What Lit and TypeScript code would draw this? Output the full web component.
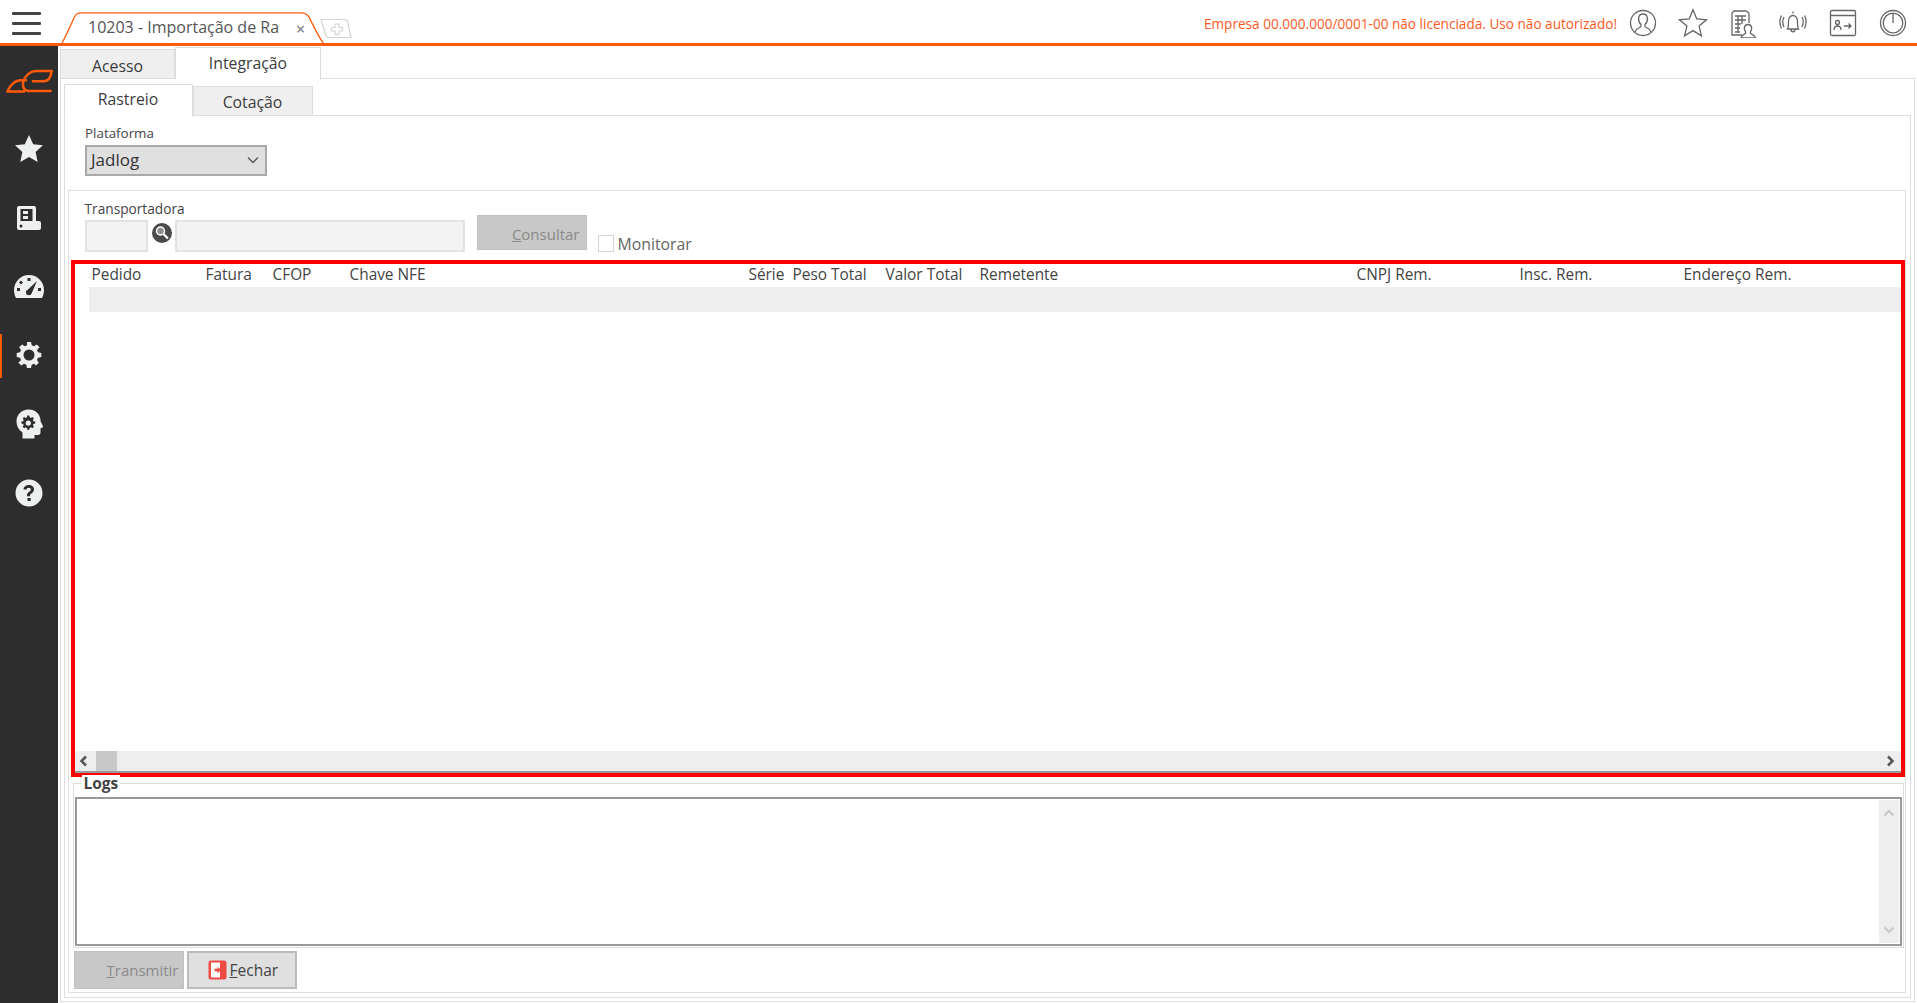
import { LitElement, html, css, svg } from "lit";
import { customElement } from "lit/decorators.js";

const COLS = [
  "Pedido", "Fatura", "CFOP", "Chave NFE", "Série", "Peso Total",
  "Valor Total", "Remetente", "CNPJ Rem.", "Insc. Rem.", "Endereço Rem.",
];

const I = {
  star: svg`<path d="M14 1l3.900 8.600 9.100 1-6.800 6.300 1.900 9.300L14 21.500 5.900 26.200l1.900-9.300L1 10.600l9.100-1z"/>`,
  book: svg`<path fill-rule="evenodd" d="M2 0h15a2 2 0 0 1 2 2v13h3a2 2 0 0 1 2 2v5a2 2 0 0 1-2 2H2a2 2 0 0 1-2-2V2a2 2 0 0 1 2-2zM3.500 3v12h12V3zM6 5h5v3H6zM6 10h5v3H6zM4 18.500a1.500 1.500 0 1 0 0 3 1.500 1.500 0 0 0 0-3z"/>`,
  gauge: svg`<path fill-rule="evenodd" d="M15 0a15 15 0 0 1 15 15c0 3-.8 5.800-2 8H2c-1.200-2.200-2-5-2-8A15 15 0 0 1 15 0zm-1.500 3v3h3V3zM7 5.500 5 7.500l2 2 2-2zM3 13v3h3v-3zm21 0v3h3v-3zM23 6l-9 8.500a3 3 0 1 0 3.800 3.500z"/>`,
  gear: svg`<path fill-rule="evenodd" d="M11 0h4l.7 3.300 2.300 1 2.800-1.800 2.800 2.800L21 8l1 2.300 3.300.7v4l-3.300.7-1 2.300 1.800 2.800-2.800 2.800L18 21.800l-2.300 1L15 26h-4l-.7-3.200-2.300-1-2.800 1.800-2.800-2.800L5 18l-1-2.300L.7 15v-4L4 10.300 5 8 3.200 5.300 6 2.500l2.800 1.800 2.300-1zm2 7.500a5.500 5.500 0 1 0 0 11 5.500 5.500 0 0 0 0-11z"/>`,
  head: svg`<path fill-rule="evenodd" d="M13 0c7 0 12 4.800 12 11 0 1.200 2.500 5 2.500 6 0 1-1.500 1.500-2.500 1.800V23c0 1.500-1 2.500-2.500 2.500H19V29H7v-6C3 20.500 1 16.500 1 12 1 5 6 0 13 0zm-1.200 6-.4 1.800-1.200.6-1.600-1-1.400 1.500 1 1.500-.5 1.300-1.800.4v2l1.800.4.500 1.300-1 1.500 1.400 1.500 1.600-1 1.200.6.400 1.800h2l.4-1.800 1.200-.6 1.600 1 1.400-1.500-1-1.500.5-1.300 1.800-.4v-2l-1.800-.4-.5-1.300 1-1.500-1.400-1.500-1.600 1-1.200-.6-.4-1.800zm1 5a2.600 2.600 0 1 1 0 5.200 2.600 2.600 0 0 1 0-5.200z"/>`,
  help: svg`<path fill-rule="evenodd" d="M13.500 0a13.500 13.500 0 1 1 0 27 13.500 13.500 0 0 1 0-27zm-.2 5.500c-3 0-5 1.600-5.400 4.300l3 .5c.2-1.300 1-2 2.300-2 1.200 0 2.100.7 2.100 1.800 0 1-.6 1.500-1.600 2.200-1.500 1-2.200 2-2.200 3.700v.8h3V16c0-.9.400-1.300 1.400-2 1.500-1 2.600-2.200 2.600-4.200 0-2.600-2.200-4.300-5.200-4.300zM12 18.500v3h3.200v-3z"/>`,
};

@customElement("app-root")
export class AppRoot extends LitElement {
  static styles = css`
    :host {
      display: block;
      width: 1917px;
      height: 1003px;
      overflow: hidden;
      background: #fff;
      color: #3c3c3c;
      font-family: "Open Sans", "Noto Sans", sans-serif;
      font-size: 15px;
      line-height: 20px;
    }
    .top {
      height: 43px;
      border-bottom: 3px solid #ff5a0a;
      display: flex;
      align-items: flex-start;
      position: relative;
    }
    .burger { margin: 12px 0 0 12px; width: 29px; height: 23px; display: flex; flex-direction: column; justify-content: space-between; }
    .burger i { display: block; height: 3px; background: #444; border-radius: 1px; }
    .doc-tab { position: relative; margin: 12px 0 0 20px; width: 265px; height: 33px; flex: none; }
    .doc-tab svg { position: absolute; left: 0; top: 0; }
    .doc-title { position: absolute; left: 27px; top: 5px; font-size: 16px; color: #555; white-space: nowrap; }
    .doc-x { position: absolute; left: 235px; top: 7px; font-size: 16px; color: #888; font-weight: 600; }
    .new-tab { margin: 18px 0 0 -6px; flex: none; }
    .top-right { margin-left: auto; display: flex; align-items: center; height: 43px; padding-right: 9px; }
    .warn { color: #ff5a1e; font-size: 13.600px; margin-right: 11px; white-space: nowrap; margin-top: 4px; }
    .tools { display: flex; gap: 20px; margin-top: 3px; }
    .tools svg { display: block; width: 30px; height: 30px; fill: none; stroke: #666; stroke-width: 1.300; }
    .body { display: flex; height: 957px; }
    .side { width: 58px; background: #2d2d2d; flex: none; position: relative; display: flex; flex-direction: column; align-items: center; padding-top: 23px; box-sizing: border-box; }
    .side .logo { width: 48px; height: 24px; margin-bottom: 41px; }
    .ico { display: block; fill: #eef0f0; height: 30px; margin-bottom: 38.800px; width: 30px; flex: none; }
    .active-bar { position: absolute; left: 0; top: 288px; width: 2px; height: 44px; background: #ff5a0a; }
    .main { flex: 1; min-width: 0; padding: 3px 2px 1px 2px; display: flex; flex-direction: column; }
    .tabs { display: flex; align-items: flex-end; height: 29px; flex: none; }
    .tab { box-sizing: border-box; background: #efefef; border: 1px solid #dcdcdc; border-bottom: none; display: flex; align-items: center; justify-content: center; flex: none; color: #3c3c3c; font-size: 15.800px; padding-top: 3px; }
    .tab.on { background: #fff; border-bottom: 1px solid #fff; margin-bottom: -2px; position: relative; padding-top: 0; padding-bottom: 3px; }
    .t-acesso { width: 115px; height: 29px; }
    .tab.on.t-integ { width: 146px; height: 33px; padding-bottom: 1px; }
    .t-ras { width: 129px; height: 33px; }
    .t-cot { width: 120px; height: 29px; }
    .tab.t-cot { padding-top: 2px; }
    .panel { flex: 1; min-height: 0; border: 1.500px solid #dedede; box-sizing: border-box; padding: 6.500px 3.500px 3.500px 2.500px; display: flex; flex-direction: column; }
    .sub { flex: 1; min-height: 0; border: 1.500px solid #dedede; box-sizing: border-box; padding: 0 3.500px 3.500px 3.500px; display: flex; flex-direction: column; }
    .plat { height: 74px; flex: none; padding: 9px 0 0 17px; box-sizing: border-box; }
    .lbl { font-size: 13.400px; line-height: 16px; color: #444; }
    .select { margin-top: 4px; width: 182px; height: 31px; box-sizing: border-box; background: #e0e0e0; border: 2px solid #a9a9a9; display: flex; align-items: center; justify-content: space-between; padding: 0 6px 0 4px; font-size: 17px; color: #333; }
    .box { flex: 1; min-height: 0; border: 1.500px solid #dedede; box-sizing: border-box; display: flex; flex-direction: column; padding: 0 0 3px 1.500px; }
    .filter { height: 69px; flex: none; padding: 10px 0 0 14px; box-sizing: border-box; }
    .filter .lbl { font-size: 13.700px; }
    .f-row { display: flex; align-items: flex-start; margin-top: 3px; }
    .inp { box-sizing: border-box; height: 32px; border: 2px solid #e2e2e2; background: #f3f3f3; flex: none; }
    .i1 { width: 63px; }
    .i2 { width: 290px; }
    .lens { width: 20px; height: 20px; margin: 3px 3px 0 4px; flex: none; }
    .btn-dis { box-sizing: border-box; background: #c8c8c8; border: 1px solid #c0c0c0; color: #8a8a8a; font-size: 15px; display: flex; align-items: center; justify-content: flex-end; padding-right: 6px; flex: none; }
    .btn-dis u { text-decoration-thickness: 1px; }
    .consult { width: 110px; height: 35px; margin: -5px 0 0 12px; padding-top: 3px; }
    .chk { width: 16px; height: 17px; box-sizing: border-box; border: 1.500px solid #d5d5d5; margin: 15px 4px 0 11px; flex: none; }
    .chk-l { font-size: 15.800px; color: #666; margin-top: 14px; }
    .red { height: 517px; flex: none; box-sizing: border-box; border: 4px solid #f00; margin: 0; display: flex; flex-direction: column; padding-left: 14px; position: relative; overflow: hidden; }
    .grid { display: grid; grid-template-columns: 114px 67px 77px 399px 44px 93px 94px 377px 163px 164px 222px; flex: none; }
    .hc { height: 23px; line-height: 22px; font-size: 15.400px; color: #444; padding-left: 3px; white-space: nowrap; }
    .gr { height: 25px; background: #eee; }
    .hs { margin-top: auto; height: 22px; margin-left: -14px; background: #eee; border-bottom: 2px solid #999; box-sizing: border-box; display: flex; align-items: center; justify-content: space-between; padding: 0 5px 0 3px; flex: none; }
    .hs .thumb { width: 21px; height: 20px; background: #c8c8c8; margin: 0 auto 0 6px; }
    .logs-wrap { flex: 1; min-height: 0; position: relative; margin: 6px 1px 0 2px; }
    .logs { height: 165px; box-sizing: border-box; border: 1.500px solid #dedede; padding: 13px 1px 1px 1px; }
    .logs-t { position: absolute; left: 9px; top: -8px; background: #fff; padding: 0 2px; font-size: 15.500px; line-height: 16px; font-weight: 700; color: #444; }
    .ta { height: 100%; box-sizing: border-box; border: 2px solid #999; position: relative; display: flex; justify-content: flex-end; padding: 1px; background: #fff; }
    .vs { width: 20px; background: #eee; display: flex; flex-direction: column; justify-content: space-between; align-items: center; padding: 7px 0; }
    .acts { display: flex; gap: 3px; margin: 3px 0 0 1px; }
    .t { width: 110px; height: 38px; padding-right: 4px; }
    .f { box-sizing: border-box; width: 110px; height: 38px; background: #e0e0e0; border: 2px solid #bbb; display: flex; align-items: center; padding-left: 19px; gap: 3px; font-size: 15.500px; color: #444; }
  `;

  chev(d: string, c: string, w = 3) {
    return html`<svg width="12" height="12" viewBox="0 0 12 12" fill="none" stroke=${c} stroke-width=${w}><path d=${d}/></svg>`;
  }

  render() {
    return html`
      <div class="top">
        <div class="burger"><i></i><i></i><i></i></div>
        <div class="doc-tab">
          <svg width="265" height="33" viewBox="0 0 265 33" fill="none"><path d="M0.500 32 C3 28 12 8 14 4 C15.500 1.500 17 .800 20 .800 H240 C244 .800 246 1.500 248 5 C250 9 258 26 263 32" stroke="#ff5a0a" stroke-width="1.300"/></svg>
          <span class="doc-title">10203 - Importação de Ra</span>
          <span class="doc-x">×</span>
        </div>
        <svg class="new-tab" width="32" height="21" viewBox="0 0 32 21" fill="none" stroke="#d4d4d4" stroke-width="1.200"><path d="M1 1.500H25q2 0 2.500 2L31 19.500H8q-1.500 0-2-1.500z"/><path d="M15 6h4v3.500h3.500v3.500H19v3.500h-4V13h-3.500V9.500H15z"/></svg>
        <div class="top-right">
          <span class="warn">Empresa 00.000.000/0001-00 não licenciada. Uso não autorizado!</span>
          <div class="tools">
            <svg viewBox="0 0 30 30"><circle cx="15" cy="15" r="12.500"/><path d="M7 24c1-4 5-4 6-5.500v-2c-4-4-3-10.500 2-10.500s6 6.500 2 10.500v2c1 1.500 5 1.500 6 5.500"/></svg>
            <svg viewBox="0 0 30 30"><path d="M15 1.800l3.800 9.200 9.700.8-7.400 6.300 2.300 9.700L15 22.600l-8.400 5.200 2.300-9.700L1.500 11.800l9.700-.8z"/></svg>
            <svg viewBox="0 0 30 30"><path d="M14 27H4V5l2-2h12l3 2v10M7 8h11M7 12h11M7 16h6M7 20h5M7 24h5M10 8v16M14 8v8"/><path d="M13 30c.5-3 3-3.500 4.500-4.500v-2c-2-2.500-1.500-7 2.500-7s4.500 4.500 2.500 7v2c1.500 1 4.500 1.500 5 4.500z"/></svg>
            <svg viewBox="0 0 30 30"><path d="M15 3.500v2M9.500 21c1-1.500 1-4 1-8 0-3 2-5.500 4.500-5.500s4.500 2.500 4.500 5.500c0 4 0 6.500 1 8zM13 21.500c0 3 4 3 4 0M6 9c-1.500 3-1.500 7 0 10M3.500 7.500c-2 4-2 9 0 13M24 9c1.500 3 1.500 7 0 10M26.500 7.500c2 4 2 9 0 13"/></svg>
            <svg viewBox="0 0 30 30"><rect x="2.500" y="2.500" width="25" height="25" rx="1.500"/><path d="M2.500 7.500h25M9.500 12.500a2 2 0 1 1 0 4 2 2 0 0 1 0-4zM6 22c0-3 1.500-4 3.500-4s3.500 1 3.500 4M16 18h7M20.500 15.500 23 18l-2.500 2.500"/></svg>
            <svg viewBox="0 0 30 30"><circle cx="15" cy="15" r="12.500"/><circle cx="15" cy="15" r="9.800"/><path d="M15 5v10"/></svg>
          </div>
        </div>
      </div>
      <div class="body">
        <nav class="side">
          <span class="active-bar"></span>
          <svg class="logo" viewBox="5 68 48 24.500" fill="none" stroke="#ff5a0a" stroke-width="2.600" stroke-linecap="round"><path d="M7 91C10 84 14 80 20 79.500H26M7 91H24"/><path d="M52 70H37C30 70 25 75 23 81C22 86 24 90 28 90.500H51"/><path d="M52 70C51.500 76 49 80.500 44 80.500H33"/></svg>
          ${[I.star, I.book, I.gauge, I.gear, I.head, I.help].map(
            (p, i) => html`<svg class="ico" viewBox=${["0 0 28 28","-3 -3 30 30","0 -3 30 30","-2 -2 30 30","-1.500 -.5 30 30","-1.500 -1.500 30 30"][i]}>${p}</svg>`
          )}
        </nav>
        <div class="main">
          <div class="tabs">
            <div class="tab t-acesso">Acesso</div>
            <div class="tab on t-integ">Integração</div>
          </div>
          <div class="panel">
            <div class="tabs">
              <div class="tab on t-ras">Rastreio</div>
              <div class="tab t-cot">Cotação</div>
            </div>
            <div class="sub">
              <div class="plat">
                <div class="lbl">Plataforma</div>
                <div class="select"><span>Jadlog</span>${this.chev("M1 3.500 6 8.500l5-5", "#555", 1.300)}</div>
              </div>
              <div class="box">
                <div class="filter">
                  <div class="lbl">Transportadora</div>
                  <div class="f-row">
                    <div class="inp i1"></div>
                    <svg class="lens" viewBox="0 0 20 20"><circle cx="10" cy="10" r="10" fill="#4a4a4a"/><circle cx="8.500" cy="8" r="4" fill="#8d8d8d" stroke="#fff" stroke-width="1.500"/><path d="M11.500 11l4.500 4.500" stroke="#fff" stroke-width="2.200"/></svg>
                    <div class="inp i2"></div>
                    <div class="btn-dis consult"><span><u>C</u>onsultar</span></div>
                    <div class="chk"></div>
                    <span class="chk-l">Monitorar</span>
                  </div>
                </div>
                <div class="red">
                  <div class="grid">
                    ${COLS.map((c) => html`<div class="hc">${c}</div>`)}
                    ${COLS.map(() => html`<div class="gr"></div>`)}
                  </div>
                  <div class="hs">
                    ${this.chev("M8 1.500 3.500 6 8 10.500", "#555", 2.500)}
                    <div class="thumb"></div>
                    ${this.chev("M4 1.500 8.500 6 4 10.500", "#555", 2.500)}
                  </div>
                </div>
                <div class="logs-wrap">
                  <div class="logs">
                    <span class="logs-t">Logs</span>
                    <div class="ta">
                      <div class="vs">
                        ${this.chev("M1.500 8.500 6 4l4.500 4.500", "#c8c8c8", 2.200)}
                        ${this.chev("M1.500 3.500 6 8l4.500-4.500", "#c8c8c8", 2.200)}
                      </div>
                    </div>
                  </div>
                  <div class="acts">
                    <div class="btn-dis t"><span><u>T</u>ransmitir</span></div>
                    <div class="f">
                      <svg width="19" height="20" viewBox="0 0 19 20"><rect x=".5" y=".5" width="18" height="19" rx="2.500" fill="#ee4b43"/><rect x="3" y="2.500" width="9" height="15" fill="#fff"/><path d="M9.500 6.800v2H6.500v2.400h3v2l3.800-3.200z" fill="#ee4b43"/></svg>
                      <span><u>F</u>echar</span>
                    </div>
                  </div>
                </div>
              </div>
            </div>
          </div>
        </div>
      </div>
    `;
  }
}
